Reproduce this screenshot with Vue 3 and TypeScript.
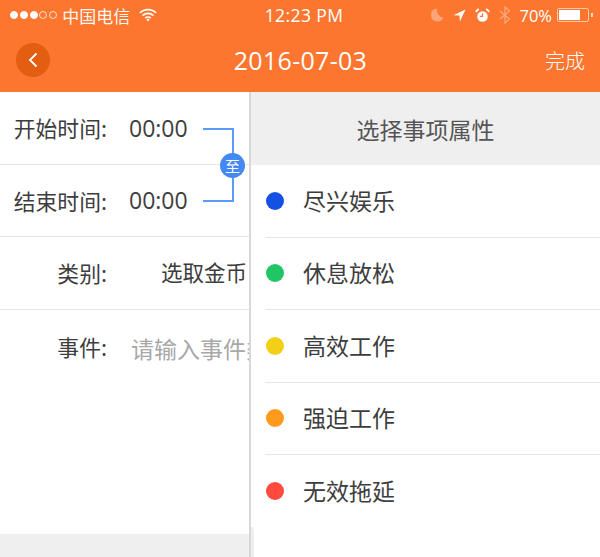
<script setup lang="ts">
const dots = ['#1450e4', '#20c565', '#f2d017', '#ff9a1f', '#ff4a3d']
const names = ['尽兴娱乐', '休息放松', '高效工作', '强迫工作', '无效拖延']
const items = names.map((name, i) => ({ name, color: dots[i] }))
</script>

<template>
  <div class="app">
    <header class="top">
      <div class="status">
        <div class="st-left">
          <span class="sig"><i class="on"></i><i class="on"></i><i class="on"></i><i></i><i></i></span>
          <span class="carrier">中国电信</span>
          <svg class="wifi" width="18" height="14" viewBox="0 0 20 15">
            <path d="M1 5.2a12.7 12.7 0 0 1 18 0M4 8.2a8.5 8.5 0 0 1 12 0M7 11a4.2 4.2 0 0 1 6 0" fill="none" stroke="#fff" stroke-width="1.9"/>
            <path d="M8.2 12.6a2.5 2.5 0 0 1 3.600 0L10 14.600z" fill="#fff"/>
          </svg>
        </div>
        <div class="clock">12:23 PM</div>
        <div class="st-right">
          <svg width="14" height="14" viewBox="0 0 14 14"><path d="M7 0.5A6.500 6.500 0 1 0 13.500 9.500 7.500 7.500 0 0 1 7 0.500z" fill="#fff" opacity=".35"/></svg>
          <svg width="13" height="13" viewBox="0 0 14 14"><path d="M13.500 0.500 0.500 6.700 7 7 7.400 13.500z" fill="#fff"/></svg>
          <svg width="15" height="15" viewBox="0 0 16 16"><circle cx="8" cy="9" r="5.600" fill="#fff"/><path d="M8 5.500V9H5.200" fill="none" stroke="#fc7630" stroke-width="1.300"/><path d="M0.800 4 4 1M15.200 4 12 1" stroke="#fff" stroke-width="2"/></svg>
          <svg width="12" height="18" viewBox="0 0 12 18"><path d="M1 5 10.500 13 6 17V1l4.500 4L1 13" fill="none" stroke="#fff" stroke-width="1.200" opacity=".4"/></svg>
          <span class="pct">70%</span>
          <span class="batt"><span class="fill"></span></span>
          <span class="nub"></span>
        </div>
      </div>
      <nav class="nav">
        <button class="back" type="button" aria-label="返回">
          <svg width="12" height="16" viewBox="0 0 12 16"><path d="M9.500 1.500 3 8l6.500 6.500" fill="none" stroke="#fff" stroke-width="1.800"/></svg>
        </button>
        <h1 class="title">2016-07-03</h1>
        <span class="done">完成</span>
      </nav>
    </header>

    <main class="body">
      <section class="form">
        <div class="time-group">
          <div class="row"><span class="label">开始时间:</span><span class="val">00:00</span></div>
          <div class="row"><span class="label">结束时间:</span><span class="val">00:00</span></div>
          <div class="bracket"></div>
          <span class="to">至</span>
        </div>
        <div class="row"><span class="label">类别:</span><span class="val pick">选取金币</span></div>
        <div class="row plain"><span class="label">事件:</span><span class="val hint">请输入事件类型</span></div>
        <div class="form-foot"></div>
      </section>

      <aside class="panel">
        <div class="panel-head">选择事项属性</div>
        <ul class="list">
          <li v-for="item in items" :key="item.name" class="item">
            <span class="dot" :style="{ background: item.color }"></span>
            <span class="name">{{ item.name }}</span>
          </li>
        </ul>
        <div class="panel-edge"></div>
      </aside>
    </main>
  </div>
</template>

<style scoped>
.app {
  width: 600px;
  height: 557px;
  overflow: hidden;
  display: flex;
  flex-direction: column;
  background: #fff;
  font-family: "Open Sans", "Noto Sans CJK SC", sans-serif;
  color: #3d3d3d;
}
.top {
  height: 92px;
  flex: none;
  background: #fc7630;
  color: #fff;
  display: flex;
  flex-direction: column;
}
.status {
  height: 30px;
  display: flex;
  align-items: center;
  justify-content: space-between;
  padding: 0 7px 0 10px;
  position: relative;
}
.st-left, .st-right { display: flex; align-items: center; }
.sig { display: flex; gap: 1.800px; }
.sig i {
  width: 8px;
  height: 8px;
  border-radius: 50%;
  border: 1px solid #fff;
  box-sizing: border-box;
  opacity: .75;
}
.sig i.on { background: #fff; opacity: 1; }
.carrier { margin-left: 5px; font-size: 17px; font-family: "Noto Sans CJK SC", sans-serif; opacity: .95; }
.wifi { margin-left: 9px; }
.clock {
  position: absolute;
  left: 0;
  right: 0;
  text-align: center;
  font-size: 17.500px;
  font-weight: 500;
  letter-spacing: .4px;
  padding-left: 8px;
}
.st-right { gap: 9px; }
.pct { font-size: 16.500px; margin-left: -1px; }
.batt {
  width: 32px;
  height: 14px;
  border: 1px solid #ffc9a8;
  border-radius: 2px;
  box-sizing: border-box;
  padding: 1px;
  margin-left: -4px;
}
.fill { display: block; width: 74%; height: 100%; background: #fff; }
.nub { width: 2px; height: 4px; background: #ffd9c2; margin-left: -7px; }
.nav {
  flex: 1;
  display: flex;
  align-items: center;
  justify-content: space-between;
  padding: 0 15px 0 16px;
  position: relative;
  top: -1px;
}
.back {
  width: 34px;
  height: 34px;
  border-radius: 50%;
  border: 0;
  padding: 0;
  background: #e45e11;
  display: flex;
  align-items: center;
  justify-content: center;
}
.title {
  margin: 0 0 0 6px;
  font-size: 25px;
  font-weight: 400;
  letter-spacing: .3px;
}
.done { font-size: 20px; font-family: "Noto Sans CJK SC", sans-serif; font-weight: 300; }

.body { flex: 1; display: flex; min-height: 0; }
.form {
  width: 249px;
  flex: none;
  display: flex;
  flex-direction: column;
  overflow: hidden;
}
.time-group { position: relative; }
.row {
  height: 72.500px;
  display: flex;
  align-items: center;
  border-bottom: 1px solid #e6e6e6;
  box-sizing: border-box;
  white-space: nowrap;
}
.row.plain { border-bottom: 0; flex: 1; align-items: flex-start; padding-top: 21px; }
.label {
  width: 107px;
  flex: none;
  text-align: right;
  font-size: 21.800px;
  font-family: "Noto Sans CJK SC", sans-serif;
}
.val { margin-left: 22px; font-size: 23px; }
.pick { margin-left: 54px; font-size: 21.500px; font-family: "Noto Sans CJK SC", sans-serif; position: relative; top: -1px; }
.hint { margin-left: 24px; color: #a8a8a8; font-size: 23px; font-family: "Noto Sans CJK SC", sans-serif; }
.form-foot { height: 23px; flex: none; background: #efefef; }
.bracket {
  position: absolute;
  left: 203px;
  top: 36px;
  width: 29px;
  height: 70px;
  border: 2px solid #5a9cf5;
  border-left: 0;
  box-sizing: content-box;
  clip-path: polygon(0 0, 100% 0, 100% 100%, 0 100%, 0 calc(100% - 2px), 29px calc(100% - 2px), 29px 2px, 0 2px);
}
.to {
  position: absolute;
  left: 220px;
  top: 60.500px;
  width: 25px;
  height: 25px;
  border-radius: 50%;
  background: #4488f1;
  color: #fff;
  font-size: 15px;
  font-family: "Noto Sans CJK SC", sans-serif;
  display: flex;
  align-items: center;
  justify-content: center;
}
.panel {
  flex: 1;
  border-left: 2px solid #d8d8d8;
  position: relative;
  display: flex;
  flex-direction: column;
  min-width: 0;
}
.panel-head {
  height: 73px;
  flex: none;
  background: #efefef;
  display: flex;
  align-items: center;
  justify-content: center;
  font-size: 23px;
  color: #555;
  font-family: "Noto Sans CJK SC", sans-serif;
}
.list { list-style: none; margin: 0; padding: 0 0 0 14px; }
.item {
  height: 72.500px;
  display: flex;
  align-items: center;
  border-bottom: 1px solid #e6e6e6;
  box-sizing: border-box;
}
.item:last-child { border-bottom: 0; }
.dot { width: 18px; height: 18px; border-radius: 50%; flex: none; margin-left: 1px; }
.name {
  margin-left: 19px;
  font-size: 23px;
  font-family: "Noto Sans CJK SC", sans-serif;
  color: #3d3d3d;
  position: relative;
  top: -1px;
}
.panel-edge {
  position: absolute;
  left: 0;
  bottom: 0;
  width: 3px;
  height: 30px;
  background: #efefef;
}
</style>
